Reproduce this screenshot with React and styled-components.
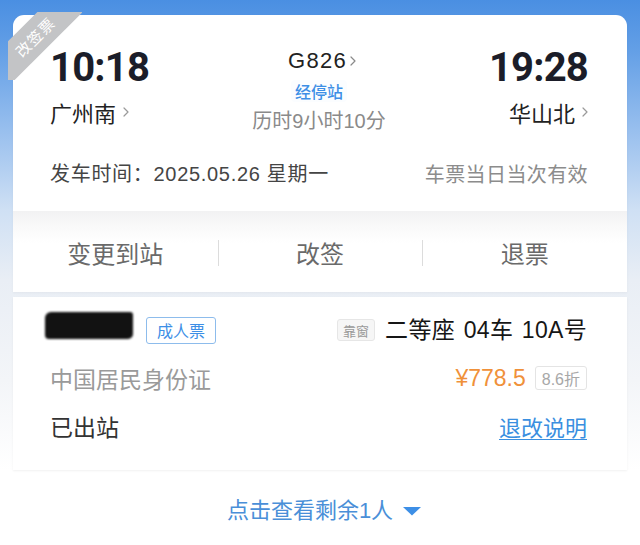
import React from "react";
import styled, { createGlobalStyle } from "styled-components";

const GlobalStyle = createGlobalStyle`
  html, body {
    margin: 0;
    padding: 0;
    width: 640px;
    height: 545px;
    overflow: hidden;
    background: #ffffff;
  }
  #root { min-height: 545px; }
  * { box-sizing: border-box; }
`;

const SANS = `"Liberation Sans", "Noto Sans CJK SC", sans-serif`;

const Page = styled.div`
  min-height: 545px;
  padding: 15px 13px 0;
  background: linear-gradient(
    to bottom,
    #4a8fe2 0px,
    #639fe6 50px,
    #98bfee 130px,
    #cfe0f4 210px,
    #e9eef5 280px,
    #f3f5f8 380px,
    #ffffff 470px
  );
  font-family: ${SANS};
`;

const Ticket = styled.section`
  position: relative;
  background: #ffffff;
  border-radius: 11px 11px 0 0;
  box-shadow: 0 1px 3px rgba(0, 0, 0, 0.04);
`;

const Ribbon = styled.div`
  position: absolute;
  left: -5px;
  top: -3px;
  width: 74px;
  height: 68px;
  overflow: hidden;
  pointer-events: none;
`;

const RibbonBand = styled.div`
  position: absolute;
  left: -35px;
  top: 9px;
  width: 124px;
  height: 32px;
  transform: rotate(-45deg);
  background: #c3c4c6;
  color: #ffffff;
  font-size: 15px;
  line-height: 32px;
  text-align: center;
  letter-spacing: 1px;
  font-family: "Noto Sans CJK SC", sans-serif;
`;

const Summary = styled.div`
  padding: 33px 39px 23px 37px;
`;

const Route = styled.div`
  display: grid;
  grid-template-columns: 1fr auto 1fr;
  align-items: start;
`;

const Endpoint = styled.div`
  display: flex;
  flex-direction: column;
  align-items: ${(p) => (p.$end ? "flex-end" : "flex-start")};
`;

const Time = styled.div`
  font-family: Roboto, "Liberation Sans", sans-serif;
  font-weight: 700;
  font-size: 40px;
  line-height: 40px;
  letter-spacing: -0.8px;
  color: #1b1d29;
`;

const Station = styled.div`
  margin-top: 9px;
  display: flex;
  align-items: center;
  gap: 7px;
  font-size: 22px;
  line-height: 30px;
  color: #222222;
  font-family: "Noto Sans CJK SC", sans-serif;
`;

const TrainInfo = styled.div`
  display: flex;
  flex-direction: column;
  align-items: center;
`;

const TrainNo = styled.div`
  display: flex;
  align-items: center;
  gap: 3px;
  font-size: 22px;
  line-height: 26px;
  letter-spacing: 1.3px;
  color: #222222;
  padding-left: 6px;
`;

const StopsTag = styled.div`
  margin-top: 6px;
  font-size: 16px;
  line-height: 22px;
  font-weight: 500;
  color: #3d8fe6;
  font-family: "Noto Sans CJK SC", sans-serif;
  padding: 0 4px;
  border-radius: 4px;
  background: #fbfdff;
`;

const Duration = styled.div`
  margin-top: 6px;
  font-size: 20px;
  line-height: 26px;
  color: #8a8a8a;
`;

const DateRow = styled.div`
  margin-top: 26px;
  display: flex;
  justify-content: space-between;
  align-items: center;
  font-size: 20px;
  line-height: 28px;
`;

const DepartText = styled.span`
  color: #454545;
  letter-spacing: 0.7px;
`;

const Validity = styled.span`
  color: #8c8c8c;
  font-family: "Noto Sans CJK SC", sans-serif;
  font-size: 20px;
  letter-spacing: 0.4px;
`;

const Actions = styled.div`
  display: grid;
  grid-template-columns: repeat(3, 1fr);
  align-items: center;
  height: 81px;
  background: linear-gradient(to bottom, #f2f2f3 0px, #f8f8f8 12px, #ffffff 32px);
`;

const Action = styled.div`
  position: relative;
  text-align: center;
  font-size: 24px;
  line-height: 30px;
  color: #6a6a6a;
  font-family: "Noto Sans CJK SC", sans-serif;
  padding-top: 2px;

  & + &::before {
    content: "";
    position: absolute;
    left: 0;
    top: 4px;
    width: 1px;
    height: 26px;
    background: #dcdcdc;
  }
`;

const PassengerCard = styled.section`
  margin-top: 5px;
  background: #ffffff;
  padding: 16px 40px 27px 37px;
  display: flex;
  flex-direction: column;
  gap: 14px;
  box-shadow: 0 1px 2px rgba(0, 0, 0, 0.06);
`;

const Row = styled.div`
  display: flex;
  justify-content: space-between;
  align-items: center;
  height: 34px;
`;

const Group = styled.div`
  display: flex;
  align-items: center;
  gap: ${(p) => p.$gap || 10}px;
`;

const Redacted = styled.span`
  display: block;
  width: 88px;
  height: 27px;
  margin-left: -5px;
  margin-bottom: 9px;
  background: #121212;
  border-radius: 6px 3px 5px 4px;
  filter: blur(1.2px);
`;

const TypeBadge = styled.span`
  display: inline-flex;
  align-items: center;
  height: 27px;
  padding: 0 10px;
  border: 1px solid #8dbcec;
  border-radius: 3px;
  color: #3d8fe6;
  font-size: 16px;
  font-family: "Noto Sans CJK SC", sans-serif;
`;

const SeatTag = styled.span`
  display: inline-flex;
  align-items: center;
  height: 22px;
  padding: 0 5px;
  background: #f6f6f6;
  border: 1px solid #e6e6e6;
  border-radius: 3px;
  color: #9a9a9a;
  font-size: 13px;
  font-family: "Noto Sans CJK SC", sans-serif;
`;

const SeatText = styled.span`
  font-size: 23px;
  line-height: 30px;
  color: #161616;
  word-spacing: 2px;
  letter-spacing: 0.3px;
`;

const IdType = styled.span`
  font-size: 23px;
  line-height: 30px;
  color: #9a9a9a;
  font-family: "Noto Sans CJK SC", sans-serif;
`;

const Amount = styled.span`
  font-size: 23px;
  line-height: 30px;
  color: #f0913a;
`;

const Discount = styled.span`
  display: inline-flex;
  align-items: center;
  height: 24px;
  padding: 0 6px;
  border: 1px solid #e4e4e4;
  border-radius: 3px;
  color: #a8a8a8;
  font-size: 16px;
`;

const Status = styled.span`
  font-size: 23px;
  line-height: 30px;
  color: #333333;
  font-family: "Noto Sans CJK SC", sans-serif;
`;

const PolicyLink = styled.a`
  font-size: 22px;
  line-height: 30px;
  color: #3a8fe0;
  text-decoration: underline;
  text-underline-offset: 3px;
  text-decoration-thickness: 1px;
  font-family: "Noto Sans CJK SC", sans-serif;
`;

const MoreToggle = styled.div`
  margin-top: 26px;
  display: flex;
  justify-content: center;
  align-items: center;
  gap: 10px;
  font-size: 22px;
  line-height: 30px;
  color: #4a8fd8;
  padding-left: 8px;
`;

const Chevron = ({ color = "#9a9a9a", h = 10 }) => (
  <svg width="6" height={h} viewBox="0 0 6 10" aria-hidden="true">
    <path d="M1 1 L5 5 L1 9" fill="none" stroke={color} strokeWidth="1.2" strokeLinecap="round" strokeLinejoin="round" />
  </svg>
);

const Caret = () => (
  <svg width="18" height="9" viewBox="0 0 18 9" aria-hidden="true">
    <path d="M0 0 H18 L9 8.5 Z" fill="#3d8fe6" />
  </svg>
);

export default function App() {
  return (
    <>
      <GlobalStyle />
      <Page>
        <Ticket>
          <Ribbon>
            <RibbonBand>改签票</RibbonBand>
          </Ribbon>
          <Summary>
            <Route>
              <Endpoint>
                <Time>10:18</Time>
                <Station>
                  广州南
                  <Chevron />
                </Station>
              </Endpoint>
              <TrainInfo>
                <TrainNo>
                  G826
                  <Chevron color="#8a8a8a" />
                </TrainNo>
                <StopsTag>经停站</StopsTag>
                <Duration>历时9小时10分</Duration>
              </TrainInfo>
              <Endpoint $end>
                <Time>19:28</Time>
                <Station>
                  华山北
                  <Chevron />
                </Station>
              </Endpoint>
            </Route>
            <DateRow>
              <DepartText>发车时间：2025.05.26 星期一</DepartText>
              <Validity>车票当日当次有效</Validity>
            </DateRow>
          </Summary>
          <Actions>
            <Action>变更到站</Action>
            <Action>改签</Action>
            <Action>退票</Action>
          </Actions>
        </Ticket>

        <PassengerCard>
          <Row>
            <Group $gap={13}>
              <Redacted />
              <TypeBadge>成人票</TypeBadge>
            </Group>
            <Group $gap={10}>
              <SeatTag>靠窗</SeatTag>
              <SeatText>二等座 04车 10A号</SeatText>
            </Group>
          </Row>
          <Row>
            <IdType>中国居民身份证</IdType>
            <Group $gap={9}>
              <Amount>¥778.5</Amount>
              <Discount>8.6折</Discount>
            </Group>
          </Row>
          <Row>
            <Status>已出站</Status>
            <PolicyLink>退改说明</PolicyLink>
          </Row>
        </PassengerCard>

        <MoreToggle>
          点击查看剩余1人
          <Caret />
        </MoreToggle>
      </Page>
    </>
  );
}
